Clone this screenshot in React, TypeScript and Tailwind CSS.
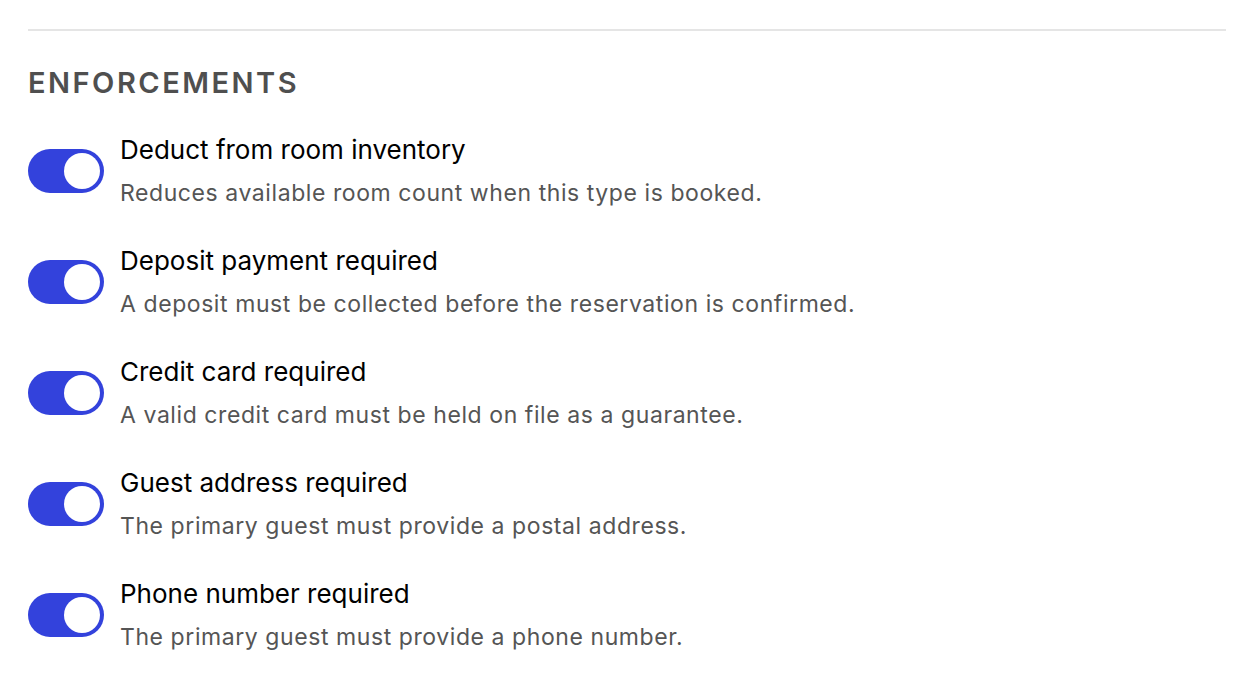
import { useState } from 'react';

type Enforcement = {
  id: string;
  title: string;
  description: string;
};

const ENFORCEMENTS: Enforcement[] = [
  {
    id: 'deduct_inventory',
    title: 'Deduct from room inventory',
    description: 'Reduces available room count when this type is booked.',
  },
  {
    id: 'deposit_required',
    title: 'Deposit payment required',
    description: 'A deposit must be collected before the reservation is confirmed.',
  },
  {
    id: 'card_required',
    title: 'Credit card required',
    description: 'A valid credit card must be held on file as a guarantee.',
  },
  {
    id: 'address_required',
    title: 'Guest address required',
    description: 'The primary guest must provide a postal address.',
  },
  {
    id: 'phone_required',
    title: 'Phone number required',
    description: 'The primary guest must provide a phone number.',
  },
];

function Toggle({ checked, onChange }: { checked: boolean; onChange: () => void }) {
  return (
    <button
      type="button"
      role="switch"
      aria-checked={checked}
      onClick={onChange}
      className={`shrink-0 w-[76px] h-[44px] rounded-full p-[4px] flex items-center ${
        checked ? 'bg-[#3342dc] justify-end' : 'bg-gray-300 justify-start'
      }`}
    >
      <span className="block w-[36px] h-[36px] rounded-full bg-white" />
    </button>
  );
}

export default function App() {
  const [values, setValues] = useState<Record<string, boolean>>({
    deduct_inventory: true,
    deposit_required: true,
    card_required: true,
    address_required: true,
    phone_required: true,
  });

  const toggle = (id: string) => setValues((v) => ({ ...v, [id]: !v[id] }));

  return (
    <main className="min-h-screen bg-white px-[28px] pt-[29px] font-['Inter',sans-serif]">
      <div className="border-t-2 border-[#e5e5e5]" />

      {/* section heading */}
      <h2 className="mt-[34px] text-[29px] leading-[36px] font-semibold tracking-[0.086em] text-[#4f4f4f]">
        ENFORCEMENTS
      </h2>

      <div className="mt-[33px] flex flex-col gap-[37px]">
        {ENFORCEMENTS.map((item) => (
          <div key={item.id} className="flex items-center gap-[16px]">
            <Toggle checked={values[item.id]} onChange={() => toggle(item.id)} />
            <div className="flex flex-col gap-[12px]">
              <span className="text-[26px] leading-[32px] text-black">{item.title}</span>
              <span className="text-[23px] leading-[30px] tracking-[0.025em] text-[#555555]">
                {item.description}
              </span>
            </div>
          </div>
        ))}
      </div>
    </main>
  );
}
